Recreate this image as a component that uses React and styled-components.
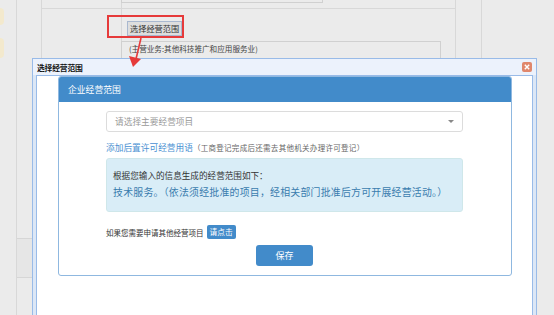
import React from 'react';
import styled, { createGlobalStyle } from 'styled-components';

const GlobalStyle = createGlobalStyle`
  html, body {
    margin: 0;
    padding: 0;
    overflow: hidden;
  }
  body {
    font-family: "Noto Sans CJK SC", "Noto Sans", sans-serif;
    color: #333;
  }
`;

// Backdrop: the registration form behind the dialog
const Page = styled.div`
  position: relative;
  width: 554px;
  height: 315px;
  overflow: hidden;
  background: #ebebeb;
`;

const Backdrop = styled.div`
  display: flex;
  height: 100%;
`;

const Strip = styled.div`
  width: 17px;
  flex-shrink: 0;
  border-right: 1px solid #d8d8d8;
  display: flex;
  flex-direction: column;
  gap: 13px;
  padding-top: 8px;
  box-sizing: border-box;
`;

const Tab = styled.div`
  width: 4px;
  height: ${props => props.h}px;
  background: #f3e9cd;
  border-radius: 0 4px 4px 0;
`;

const Gutter = styled.div`
  width: 25px;
  flex-shrink: 0;
  border-right: 1px solid #d8d8d8;
  display: flex;
  flex-direction: column;
  padding-top: 238px;
  box-sizing: border-box;
`;

const GutterBand = styled.div`
  height: 38px;
  border-top: 1px solid #d6d6d6;
  border-bottom: 1px solid #d6d6d6;
  background: #e6e6e6;
`;

const Table = styled.div`
  width: 413px;
  flex-shrink: 0;
  border-right: 1px solid #d8d8d8;
  display: flex;
  flex-direction: column;
`;

const Row = styled.div`
  display: flex;
  height: ${props => props.h ? `${props.h}px` : 'auto'};
  border-bottom: ${props => props.line ? '1px solid #d8d8d8' : 'none'};
`;

const LabelCell = styled.div`
  width: 79px;
  flex-shrink: 0;
  border-right: 1px solid #d8d8d8;
`;

const ValueCell = styled.div`
  flex: 1;
  display: flex;
  flex-direction: column;
  align-items: flex-start;
`;

const TopBox = styled.div`
  width: 200px;
  height: 2px;
  margin-left: -1px;
  border: 1px solid #d0d0d0;
  border-top: none;
`;

const FormButton = styled.div`
  margin: 12px 0 0 5px;
  height: 15px;
  padding: 0 2px;
  box-sizing: border-box;
  border: 1px solid #a9b8cf;
  background: #dedede;
  font-size: 8.2px;
  line-height: 13px;
  color: #333;
  white-space: nowrap;
`;

const ScopeBox = styled.div`
  margin: 5px 0 0 -1px;
  width: 320px;
  height: 30px;
  box-sizing: border-box;
  border: 1px solid #d0d0d0;
  padding: 0 0 0 7px;
  font-size: 7.6px;
  line-height: 13px;
  color: #444;
  white-space: nowrap;
`;

const Spacer = styled.div`
  width: 25px;
  flex-shrink: 0;
  border-right: 1px solid #d8d8d8;
`;

// Annotations drawn over the form and the dialog
const RedFrame = styled.div`
  position: absolute;
  left: 107px;
  top: 15px;
  width: 77px;
  height: 23px;
  box-sizing: border-box;
  border: 2px solid #e63a3a;
`;

const Arrow = styled.svg`
  position: absolute;
  left: 126px;
  top: 37px;
`;

// Dialog
const Dialog = styled.div`
  position: absolute;
  left: 32px;
  top: 58px;
  width: 505px;
  height: 270px;
  box-sizing: border-box;
  border: 1px solid #99bbe8;
  background: #dce7f6;
  padding: 0 3px;
  display: flex;
  flex-direction: column;
`;

const TitleBar = styled.div`
  height: 16px;
  margin: 0 -3px;
  padding: 0 4px;
  background: #ecf2fc;
  display: flex;
  align-items: center;
  justify-content: space-between;
`;

const DialogTitle = styled.span`
  font-size: 7.8px;
  font-weight: bold;
  color: #111;
  letter-spacing: -0.2px;
`;

const CloseButton = styled.div`
  width: 10px;
  height: 10px;
  border-radius: 2px;
  background: #e0876c;
  display: flex;
  align-items: center;
  justify-content: center;
`;

const DialogBody = styled.div`
  flex: 1;
  border: 1px solid #99bbe8;
  background: #fff;
  padding: 0 20px 0 21px;
`;

const Panel = styled.div`
  border: 1px solid #8fb8e0;
  border-radius: 3px;
  overflow: hidden;
`;

const PanelHeader = styled.div`
  height: 25px;
  background: #428bca;
  color: #fff;
  font-size: 8.8px;
  line-height: 25px;
  padding-left: 9px;
`;

const PanelBody = styled.div`
  padding: 9px 48px 9px 47px;
  display: flex;
  flex-direction: column;
`;

const Select = styled.div`
  height: 21px;
  box-sizing: border-box;
  border: 1px solid #dcdcdc;
  border-radius: 3px;
  display: flex;
  align-items: center;
  justify-content: space-between;
  padding: 0 8px;
  font-size: 8.7px;
  color: #999;
`;

const Caret = styled.span`
  width: 0;
  height: 0;
  border-left: 3px solid transparent;
  border-right: 3px solid transparent;
  border-top: 3px solid #888;
`;

const LinkRow = styled.div`
  margin-top: 8px;
  height: 14px;
  display: flex;
  align-items: center;
  white-space: nowrap;
`;

const Link = styled.span`
  font-size: 8.7px;
  color: #4a90d2;
`;

const Hint = styled.span`
  font-size: 7.5px;
  color: #666;
  letter-spacing: 0.3px;
`;

const InfoBox = styled.div`
  margin-top: 4px;
  height: 54px;
  box-sizing: border-box;
  border: 1px solid #cfe7ea;
  border-radius: 3px;
  background: #d9edf7;
  padding: 8px 7px 0 6px;
`;

const InfoLine = styled.div`
  height: 17px;
  line-height: 17px;
  font-size: ${props => props.size}px;
  color: ${props => props.color};
  letter-spacing: ${props => props.spacing || 0}px;
  white-space: nowrap;
`;

const ApplyRow = styled.div`
  margin-top: 13px;
  display: flex;
  align-items: center;
  gap: 3px;
  font-size: 7.5px;
  color: #333;
  white-space: nowrap;
`;

const SmallButton = styled.span`
  height: 14px;
  line-height: 14px;
  padding: 0 3px;
  border-radius: 2px;
  background: #428bca;
  color: #fff;
  font-size: 7.7px;
`;

const SaveButton = styled.div`
  align-self: center;
  margin-top: 6px;
  width: 57px;
  height: 21px;
  border-radius: 3px;
  background: #428bca;
  color: #fff;
  font-size: 9px;
  line-height: 21px;
  text-align: center;
`;

export default function App() {
  return (
    <Page>
      <GlobalStyle />
      <Backdrop>
        <Strip>
          <Tab h={17} />
          <Tab h={20} />
        </Strip>
        <Gutter>
          <GutterBand />
        </Gutter>
        <Table>
          <Row h={8} line>
            <LabelCell />
            <ValueCell>
              <TopBox />
            </ValueCell>
          </Row>
          <Row>
            <LabelCell />
            <ValueCell>
              <FormButton>选择经营范围</FormButton>
              <ScopeBox>(主营业务:其他科技推广和应用服务业)</ScopeBox>
            </ValueCell>
          </Row>
        </Table>
        <Spacer />
      </Backdrop>

      <RedFrame />

      <Dialog>
        <TitleBar>
          <DialogTitle>选择经营范围</DialogTitle>
          <CloseButton>
            <svg width="6" height="6" viewBox="0 0 6 6">
              <path d="M0.8 0.8 L5.2 5.2 M5.2 0.8 L0.8 5.2" stroke="#fff" strokeWidth="1.4" />
            </svg>
          </CloseButton>
        </TitleBar>
        <DialogBody>
          <Panel>
            <PanelHeader>企业经营范围</PanelHeader>
            <PanelBody>
              <Select>
                <span>请选择主要经营项目</span>
                <Caret />
              </Select>
              <LinkRow>
                <Link>添加后置许可经营用语</Link>
                <Hint>（工商登记完成后还需去其他机关办理许可登记）</Hint>
              </LinkRow>
              <InfoBox>
                <InfoLine size={8.6} color="#333">根据您输入的信息生成的经营范围如下：</InfoLine>
                <InfoLine size={9.9} color="#3a7cae" spacing={0.25}>
                  技术服务。（依法须经批准的项目，经相关部门批准后方可开展经营活动。）
                </InfoLine>
              </InfoBox>
              <ApplyRow>
                如果您需要申请其他经营项目
                <SmallButton>请点击</SmallButton>
              </ApplyRow>
              <SaveButton>保存</SaveButton>
            </PanelBody>
          </Panel>
        </DialogBody>
      </Dialog>

      <Arrow width="20" height="32" viewBox="0 0 20 32">
        <line x1="15" y1="1" x2="10" y2="22" stroke="#e63a3a" strokeWidth="1.6" />
        <polygon points="3,19 15,22 7,30" fill="#e63a3a" />
      </Arrow>
    </Page>
  );
}
